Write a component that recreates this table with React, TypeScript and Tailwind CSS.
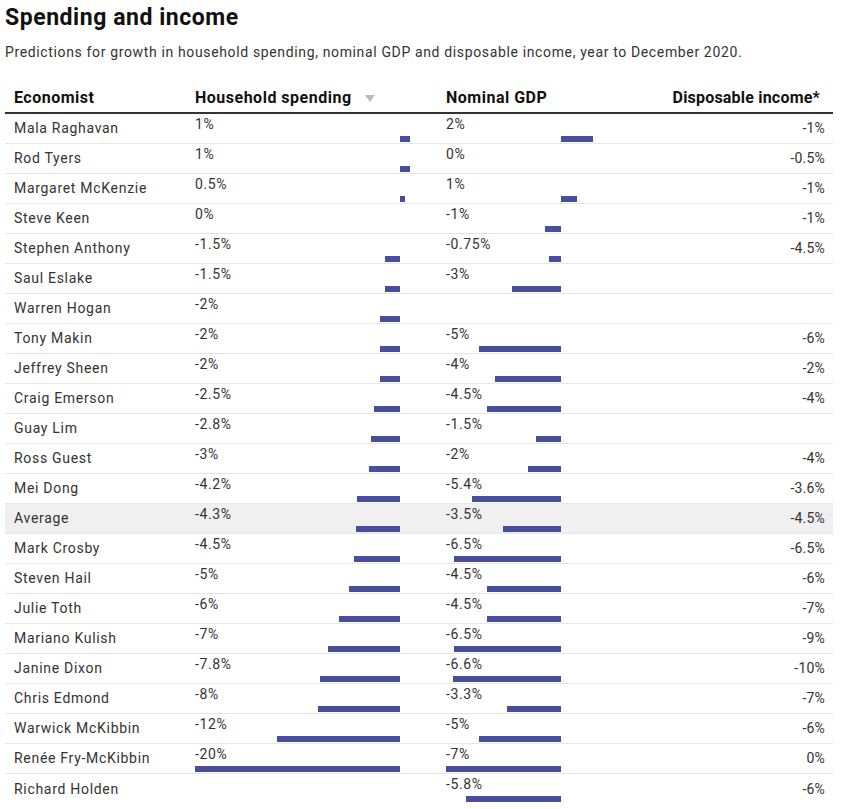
const ROWS: [string, number | null, number | null, string][] = [
  ['Mala Raghavan', 1, 2, '-1%'],
  ['Rod Tyers', 1, 0, '-0.5%'],
  ['Margaret McKenzie', 0.5, 1, '-1%'],
  ['Steve Keen', 0, -1, '-1%'],
  ['Stephen Anthony', -1.5, -0.75, '-4.5%'],
  ['Saul Eslake', -1.5, -3, ''],
  ['Warren Hogan', -2, null, ''],
  ['Tony Makin', -2, -5, '-6%'],
  ['Jeffrey Sheen', -2, -4, '-2%'],
  ['Craig Emerson', -2.5, -4.5, '-4%'],
  ['Guay Lim', -2.8, -1.5, ''],
  ['Ross Guest', -3, -2, '-4%'],
  ['Mei Dong', -4.2, -5.4, '-3.6%'],
  ['Average', -4.3, -3.5, '-4.5%'],
  ['Mark Crosby', -4.5, -6.5, '-6.5%'],
  ['Steven Hail', -5, -4.5, '-6%'],
  ['Julie Toth', -6, -4.5, '-7%'],
  ['Mariano Kulish', -7, -6.5, '-9%'],
  ['Janine Dixon', -7.8, -6.6, '-10%'],
  ['Chris Edmond', -8, -3.3, '-7%'],
  ['Warwick McKibbin', -12, -5, '-6%'],
  ['Renée Fry-McKibbin', -20, -7, '0%'],
  ['Richard Holden', null, -5.8, '-6%'],
];

// zero point (px from left of bar track) and px per percentage point
function BarCell({ value, zero, scale, width }: { value: number | null; zero: number; scale: number; width: number }) {
  if (value === null) return <div />;
  const len = Math.abs(value) * scale;
  const left = value < 0 ? zero - len : zero;
  return (
    <div className="flex flex-col pt-[2px]">
      <div className="h-4 text-[14px] leading-4 tracking-[0.6px] text-[#333]">{value}%</div>
      <div className="mt-[4px] flex h-[6px]" style={{ width }}>
        <div className="h-[6px] bg-[#484e9c]" style={{ marginLeft: left, width: len }} />
      </div>
    </div>
  );
}

export default function App() {
  return (
    <div className="min-h-screen bg-white px-[5px] text-[#222]" style={{ fontFamily: 'Roboto, "Liberation Sans", sans-serif' }}>
      <h1 className="pt-[5px] text-[23px] font-bold leading-[26px] tracking-[0.55px] text-[#111]">Spending and income</h1>
      <p className="mt-[11px] text-[14px] leading-5 tracking-[0.64px] text-[#333]">
        Predictions for growth in household spending, nominal GDP and disposable income, year to December 2020.
      </p>

      <div className="mt-[26px] w-[828px]">
        {/* header */}
        <div className="flex border-b-2 border-[#333] pb-[4px] text-[16px] font-bold leading-5 tracking-[0.5px] text-[#111]">
          <div className="w-[190px] pl-[9px]">Economist</div>
          <div className="flex w-[251px] items-center">
            Household spending
            <svg className="ml-[13px]" width="10" height="7" viewBox="0 0 10 7">
              <path d="M0 0h10L5 7z" fill="#bbb" />
            </svg>
          </div>
          <div className="w-[200px]">Nominal GDP</div>
          <div className="flex-1 pr-[13px] text-right tracking-[0.2px]">Disposable income*</div>
        </div>

        {ROWS.map(([name, hs, gdp, inc], i) => (
          <div
            key={name}
            className={`flex h-[30px] text-[14px] text-[#333] ${i < ROWS.length - 1 ? 'border-b border-[#e6e6e6]' : ''} ${name === 'Average' ? 'bg-[#f0f0f0]' : ''}`}
          >
            <div className="flex w-[190px] items-center pl-[9px] tracking-[0.7px]">{name}</div>
            <div className="w-[251px]">
              <BarCell value={hs} zero={205} scale={10.25} width={215} />
            </div>
            <div className="w-[200px]">
              <BarCell value={gdp} zero={115} scale={16.43} width={147} />
            </div>
            <div className="flex flex-1 items-center justify-end pr-[8px] tracking-[0.2px]">{inc}</div>
          </div>
        ))}
      </div>
    </div>
  );
}
